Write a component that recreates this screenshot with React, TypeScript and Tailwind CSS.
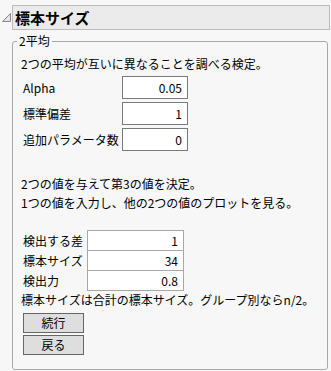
const font = { fontFamily: '"Noto Sans CJK JP", "Noto Sans", sans-serif' };

function Field({ value, className }: { value: string; className: string }) {
  return (
    <div className={`box-border bg-white pr-[5px] text-right ${className}`}>
      {value}
    </div>
  );
}

export default function App() {
  const top = [
    ["Alpha", "0.05"],
    ["標準偏差", "1"],
    ["追加パラメータ数", "0"],
  ];
  const bottom = [
    ["検出する差", "1"],
    ["標本サイズ", "34"],
    ["検出力", "0.8"],
  ];

  return (
    <div
      className="h-[371px] w-[331px] overflow-hidden bg-[#f7f7f7] pt-[5px] text-[12px] text-black"
      style={font}
    >
      <div className="flex items-center">
        <svg width="9" height="9" viewBox="0 0 9 9" className="ml-[2px]">
          <polygon
            points="8.5,0.5 8.5,8.5 0.5,8.5"
            fill="#e4e4e4"
            stroke="#8a8a8a"
            strokeWidth="1"
          />
        </svg>
        <div className="ml-[1px] box-border h-[25px] w-[318px] border border-[#bcbcbc] bg-[#ebebeb] pl-[2px] text-[15px] font-bold leading-[23px]">
          標本サイズ
        </div>
      </div>

      <fieldset className="ml-[12px] mt-[4px] box-border h-[336px] w-[316px] rounded-[3px] border border-[#a8a8a8]">
        <legend className="ml-[4px] px-[2px] leading-[14px]">2平均</legend>
        <div className="pl-[8px]">
          <div className="mt-[8px] leading-[16px]">
            2つの平均が互いに異なることを調べる検定。
          </div>
          <div className="mt-[4px] flex flex-col gap-[3px]">
            {top.map(([label, value]) => (
              <div key={label} className="flex items-center">
                <div className="ml-[2px] w-[99px]">{label}</div>
                <Field
                  value={value}
                  className="h-[23px] w-[66px] border border-[#7a7a7a] leading-[21px]"
                />
              </div>
            ))}
          </div>

          <div className="mt-[23px] leading-[19px]">
            <div>2つの値を与えて第3の値を決定。</div>
            <div>1つの値を入力し、他の2つの値のプロットを見る。</div>
          </div>

          <div className="mt-[18px] flex flex-col">
            {bottom.map(([label, value], i) => (
              <div key={label} className={`flex items-center ${i > 0 ? "-mt-px" : ""}`}>
                <div className="ml-[2px] w-[64px]">{label}</div>
                <Field
                  value={value}
                  className="h-[21px] w-[97px] border border-[#a8a8a8] leading-[19px]"
                />
              </div>
            ))}
          </div>

          <div className="mt-[1px] leading-[16px]">
            標本サイズは合計の標本サイズ。グループ別ならn/2。
          </div>

          <div className="ml-[2px] mt-[5px] flex flex-col gap-[2px]">
            <button className="box-border h-[20px] w-[61px] border border-[#666] bg-[#dedede] text-[12px] leading-[18px]">
              続行
            </button>
            <button className="box-border h-[20px] w-[61px] border border-[#666] bg-[#dedede] text-[12px] leading-[18px]">
              戻る
            </button>
          </div>
        </div>
      </fieldset>
    </div>
  );
}
